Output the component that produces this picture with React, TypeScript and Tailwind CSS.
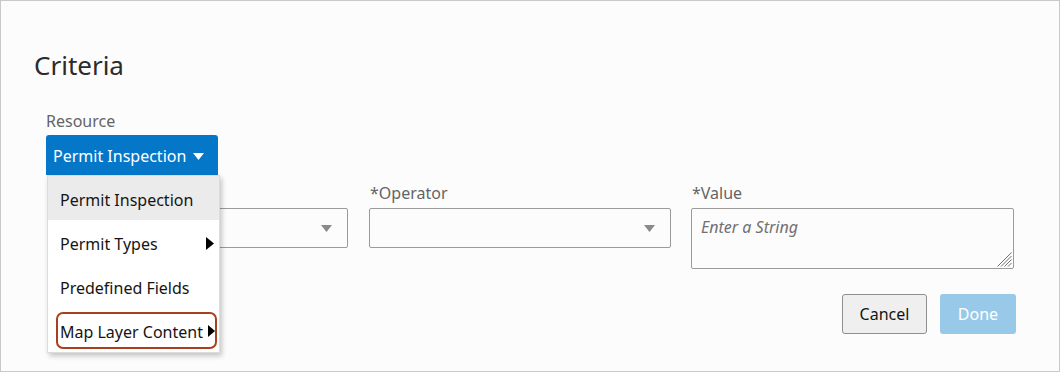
import React from "react";

function DownTri({ color, className }: { color: string; className?: string }) {
  return (
    <svg width="11" height="7" viewBox="0 0 11 7" className={className}>
      <polygon points="0,0 11,0 5.5,7" fill={color} />
    </svg>
  );
}

function RightTri({ className, w = 8, h = 13 }: { className?: string; w?: number; h?: number }) {
  return (
    <svg width={w} height={h} viewBox={`0 0 ${w} ${h}`} className={className}>
      <polygon points={`0,0 ${w},${h / 2} 0,${h}`} fill="#000" />
    </svg>
  );
}

function Select({ width }: { width: string }) {
  return (
    <div className={`${width} h-[40px] border border-[#9b9b9b] rounded-[2px] bg-[#fcfcfc] flex items-center justify-end pr-[15px]`}>
      <DownTri color="#8a8a8a" />
    </div>
  );
}

export default function App() {
  return (
    <div
      className="w-[1060px] h-[372px] border border-[#c9c9c9] bg-[#fcfcfc] overflow-hidden text-[16px] leading-[22px]"
      style={{ fontFamily: '"Noto Sans", "Open Sans", sans-serif' }}
    >
      <div className="pt-[47px] pl-[33px]">
        <h1 className="text-[26px] leading-[34px] text-[#2b2b2b] font-normal">Criteria</h1>
      </div>

      <div className="pl-[45px]">
        <div className="mt-[28px] text-[#646464]">Resource</div>
        <div className="relative mt-[3px] w-[172px] z-10">
          <div className="h-[40px] bg-[#0577c9] rounded-t-[3px] flex items-center pl-[7px] pt-[2px] text-white">
            <span>Permit Inspection</span>
            <DownTri color="#ffffff" className="ml-[7px]" />
          </div>
          <div className="absolute top-full left-[1px] w-[173px] bg-white border border-[#dcdcdc] shadow-[2px_3px_5px_rgba(0,0,0,0.22)] text-[#161513]">
            <div className="h-[44px] pt-[13px] pl-[12px] bg-[#ebebeb]">Permit Inspection</div>
            <div className="relative h-[44px] pt-[13px] pl-[12px]">
              Permit Types
              <RightTri className="absolute right-[5px] top-[17px]" />
            </div>
            <div className="h-[44px] pt-[13px] pl-[12px]">Predefined Fields</div>
            <div className="relative h-[44px] pt-[13px] pl-[12px] whitespace-nowrap">
              Map Layer Content
              <RightTri className="absolute right-[4px] top-[17px]" w={7} h={12} />
              <div className="absolute left-[8px] right-[2px] top-[4px] h-[37px] border-2 border-[#a8401f] rounded-[7px]" />
            </div>
          </div>
        </div>

        <div className="mt-[7px] flex">
          <div className="w-[302px]">
            <div className="h-[22px]" />
            <div className="mt-[4px] pl-[2px]">
              <Select width="w-[300px]" />
            </div>
          </div>
          <div className="w-[302px] ml-[21px]">
            <div className="text-[#646464] pl-[1px]">*Operator</div>
            <div className="mt-[4px]">
              <Select width="w-[302px]" />
            </div>
          </div>
          <div className="w-[323px] ml-[20px]">
            <div className="text-[#646464] pl-[1px]">*Value</div>
            <div className="mt-[4px] relative w-[323px] h-[61px] border border-[#9b9b9b] rounded-[2px] bg-[#fcfcfc] pt-[7px] pl-[9px] italic text-[#707070]">
              Enter a String
              <svg width="16" height="16" viewBox="0 0 16 16" className="absolute right-[1px] bottom-[1px]">
                <g stroke="#6e6e6e" strokeWidth="1">
                  <line x1="15.5" y1="1.5" x2="1.5" y2="15.5" />
                  <line x1="15.5" y1="5" x2="5" y2="15.5" />
                  <line x1="15.5" y1="8.5" x2="8.5" y2="15.5" />
                  <line x1="15.5" y1="12" x2="12" y2="15.5" />
                </g>
              </svg>
            </div>
          </div>
        </div>

        <div className="mt-[25px] w-[970px] flex justify-end">
          <button className="w-[85px] h-[40px] border border-[#8f8f8f] rounded-[3px] bg-[#efefef] text-[#161513]">
            Cancel
          </button>
          <button className="ml-[13px] w-[76px] h-[40px] rounded-[3px] bg-[#99c9e9] text-white">Done</button>
        </div>
      </div>
    </div>
  );
}
